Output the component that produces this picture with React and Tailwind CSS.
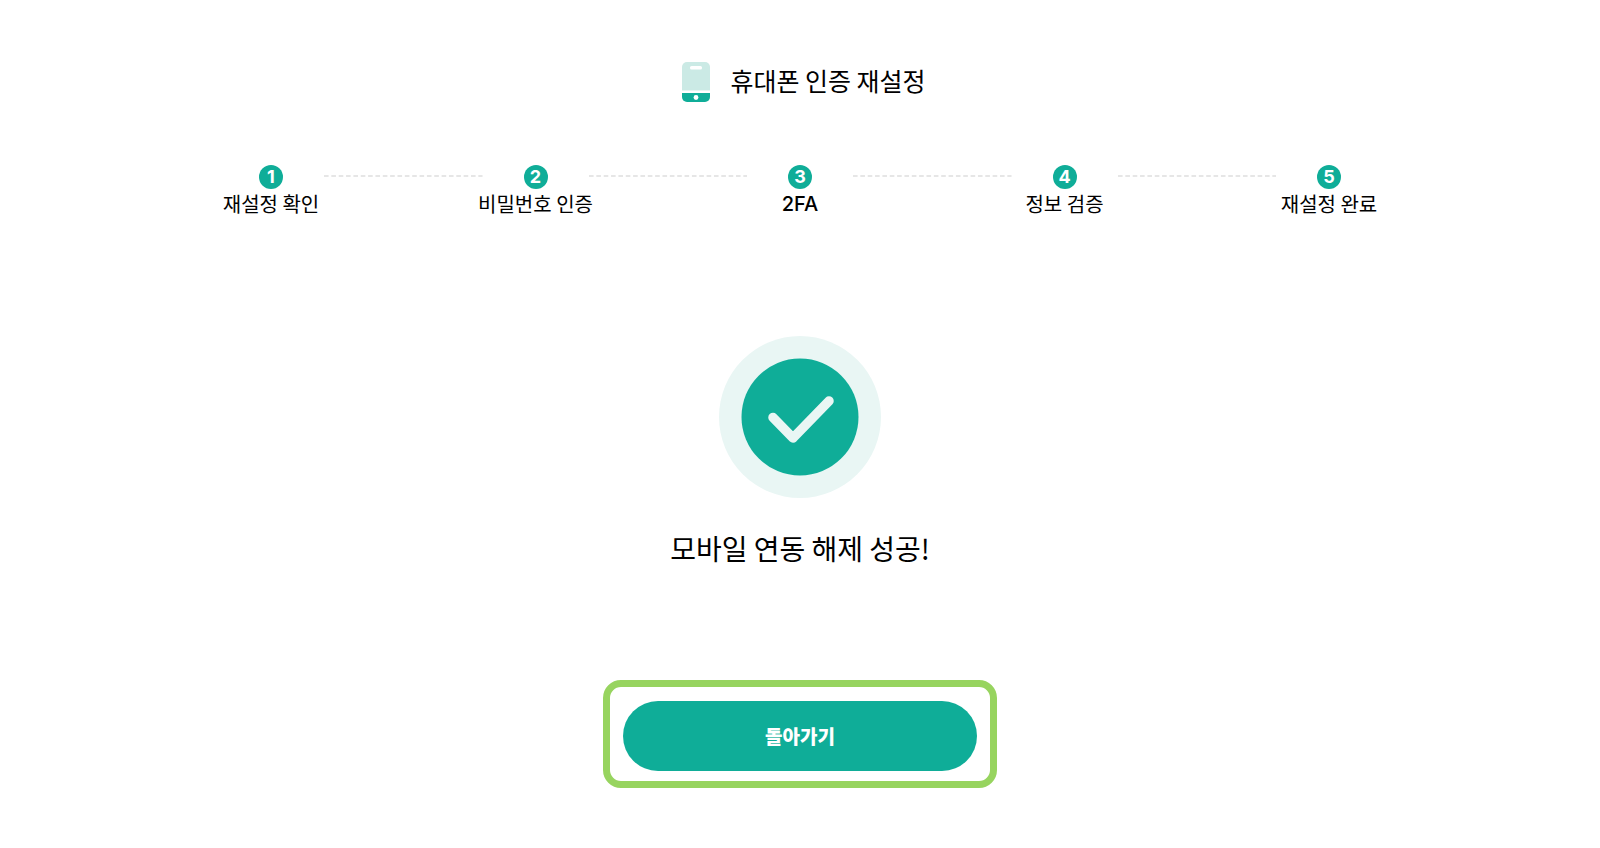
import React from 'react';

const steps = [
  { label: '재설정 확인' },
  { label: '비밀번호 인증' },
  { label: '2FA', latin: true },
  { label: '정보 검증' },
  { label: '재설정 완료' },
];

const PhoneIcon = () => (
  <svg width="28" height="40" viewBox="0 0 28 40" aria-hidden="true">
    <path d="M5 0h18a5 5 0 0 1 5 5v23.5H0V5a5 5 0 0 1 5-5z" fill="#cbeae5" />
    <path d="M0 31h28v4a5 5 0 0 1-5 5H5a5 5 0 0 1-5-5z" fill="#0fad98" />
    <rect x="8" y="4" width="12" height="3.6" rx="1.6" fill="#fff" />
    <circle cx="14" cy="35.5" r="2.4" fill="#fff" />
  </svg>
);

const SuccessIcon = () => (
  <svg className="mx-auto" width="162" height="162" viewBox="0 0 162 162" aria-hidden="true">
    <circle cx="81" cy="81" r="81" fill="#e9f6f4" />
    <circle cx="81" cy="81" r="58.5" fill="#0fad98" />
    <path
      d="M54 81.5 74 102 110 65"
      fill="none"
      stroke="#e9f6f4"
      strokeWidth="9.5"
      strokeLinecap="round"
      strokeLinejoin="round"
    />
  </svg>
);

const Stepper = () => (
  <ol className="mx-auto mt-[63px] flex w-full max-w-[1164px] items-start">
    {steps.map(({ label, latin }, index) => (
      <React.Fragment key={label}>
        {index > 0 && (
          <li aria-hidden="true" className="flex h-6 flex-1 items-start pt-[10px]">
            <svg className="h-[2px] w-full">
              <line x1="0" y1="1" x2="100%" y2="1" stroke="#e6e6e6" strokeWidth="2" strokeDasharray="4.6 2.75" />
            </svg>
          </li>
        )}
        <li className="flex w-[106px] flex-col items-center">
          <span className="flex size-6 items-center justify-center rounded-full bg-[#0fad98] font-[Inter,sans-serif] text-lg leading-6 font-bold text-white">
            {index + 1}
          </span>
          <span
            className={`text-xl leading-[30px] whitespace-nowrap ${latin ? 'font-[Inter,sans-serif] font-medium' : ''}`}
          >
            {label}
          </span>
        </li>
      </React.Fragment>
    ))}
  </ol>
);

const App = () => {
  return (
    <main className="min-h-screen bg-white px-8 pt-[62px] pb-14 font-['Noto_Sans_CJK_KR',sans-serif] text-black">
      <header className="flex items-start justify-center gap-5 pl-2">
        <PhoneIcon />
        <h1 className="text-[25px] leading-9">휴대폰 인증 재설정</h1>
      </header>

      <Stepper />

      <section className="mt-[117px] text-center">
        <SuccessIcon />
        <p className="mt-[30px] text-[28px] leading-10">모바일 연동 해제 성공!</p>
      </section>

      <div className="mx-auto mt-28 w-full max-w-[394px] rounded-[18px] border-[7px] border-[#97d45f] px-[13px] pt-[14px] pb-[10px]">
        <button type="button" className="h-[70px] w-full rounded-full bg-[#0fad98] text-[19px] font-black text-white">
          돌아가기
        </button>
      </div>
    </main>
  );
};

export default App;
